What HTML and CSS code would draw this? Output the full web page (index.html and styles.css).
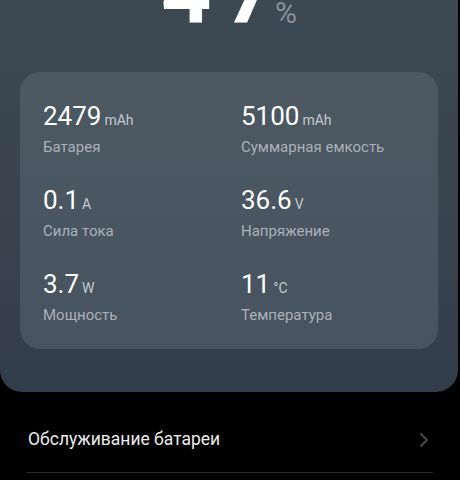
FILE: index.html
```html
<!DOCTYPE html>
<html lang="ru">
<head>
<meta charset="utf-8">
<link rel="stylesheet" href="styles.css">
</head>
<body>
<div class="panel">
  <div class="hero">
    <span class="hero-num"><span class="hero-d">4</span>7</span><span class="hero-pct">%</span>
  </div>
  <div class="card">
    <div class="stat">
      <div class="val">2479<span class="unit">mAh</span></div>
      <div class="lbl">Батарея</div>
    </div>
    <div class="stat">
      <div class="val">5100<span class="unit">mAh</span></div>
      <div class="lbl">Суммарная емкость</div>
    </div>
    <div class="stat">
      <div class="val">0.1<span class="unit">A</span></div>
      <div class="lbl">Сила тока</div>
    </div>
    <div class="stat">
      <div class="val">36.6<span class="unit">V</span></div>
      <div class="lbl">Напряжение</div>
    </div>
    <div class="stat">
      <div class="val">3.7<span class="unit">W</span></div>
      <div class="lbl">Мощность</div>
    </div>
    <div class="stat">
      <div class="val">11<span class="unit">°C</span></div>
      <div class="lbl">Температура</div>
    </div>
  </div>
</div>
<div class="item">
  <span class="item-text">Обслуживание батареи</span>
  <svg class="chev" width="10" height="16" viewBox="0 0 10 16"><path d="M2 2 L8 8 L2 14" fill="none" stroke="#4a4a4a" stroke-width="2" stroke-linecap="round" stroke-linejoin="round"/></svg>
</div>
<div class="sep"></div>
</body>
</html>
```

FILE: styles.css
```css
* { box-sizing: border-box; }
html, body {
  margin: 0;
  padding: 0;
  background: #000;
  font-family: Roboto, "Noto Sans", sans-serif;
  overflow: hidden;
}
.panel {
  width: 458px;
  height: 392px;
  background: linear-gradient(180deg, #3c4852 0%, #38434e 60%, #323d4a 100%);
  border-radius: 0 0 22px 22px;
  overflow: hidden;
}
.hero {
  display: flex;
  justify-content: center;
  align-items: baseline;
  margin-top: -57px;
  height: 129px;
  line-height: 100px;
}
.hero-num {
  font-size: 88px;
  font-weight: 700;
  color: #ffffff;
}
.hero-d {
  margin-right: 13px;
}
.hero-pct {
  font-size: 30px;
  color: #89939a;
}
.card {
  margin: 0 20px;
  height: 277px;
  border-radius: 20px;
  background: linear-gradient(180deg, #4c5862 0%, #47535e 100%);
  padding: 28px 0 0 23px;
  display: grid;
  grid-template-columns: 198px 1fr;
  row-gap: 27px;
  align-content: start;
}
.stat {
  display: flex;
  flex-direction: column;
  gap: 5px;
}
.val {
  font-size: 26px;
  line-height: 32px;
  height: 32px;
  color: #ffffff;
  white-space: nowrap;
}
.unit {
  font-size: 14px;
  line-height: 1;
  color: #c4cacf;
  margin-left: 3px;
}
.lbl {
  font-size: 15px;
  line-height: 20px;
  color: #aab2b9;
  white-space: nowrap;
}
.item {
  display: flex;
  justify-content: space-between;
  align-items: center;
  margin: 0 27px;
  padding: 35px 4px 21px 1px;
}
.item-text {
  font-size: 17.5px;
  line-height: 24px;
  color: #ececec;
}
.chev { display: block; margin-top: 1px; }
.sep {
  margin: 0 27px;
  height: 1px;
  background: #2a2a2a;
}
```
